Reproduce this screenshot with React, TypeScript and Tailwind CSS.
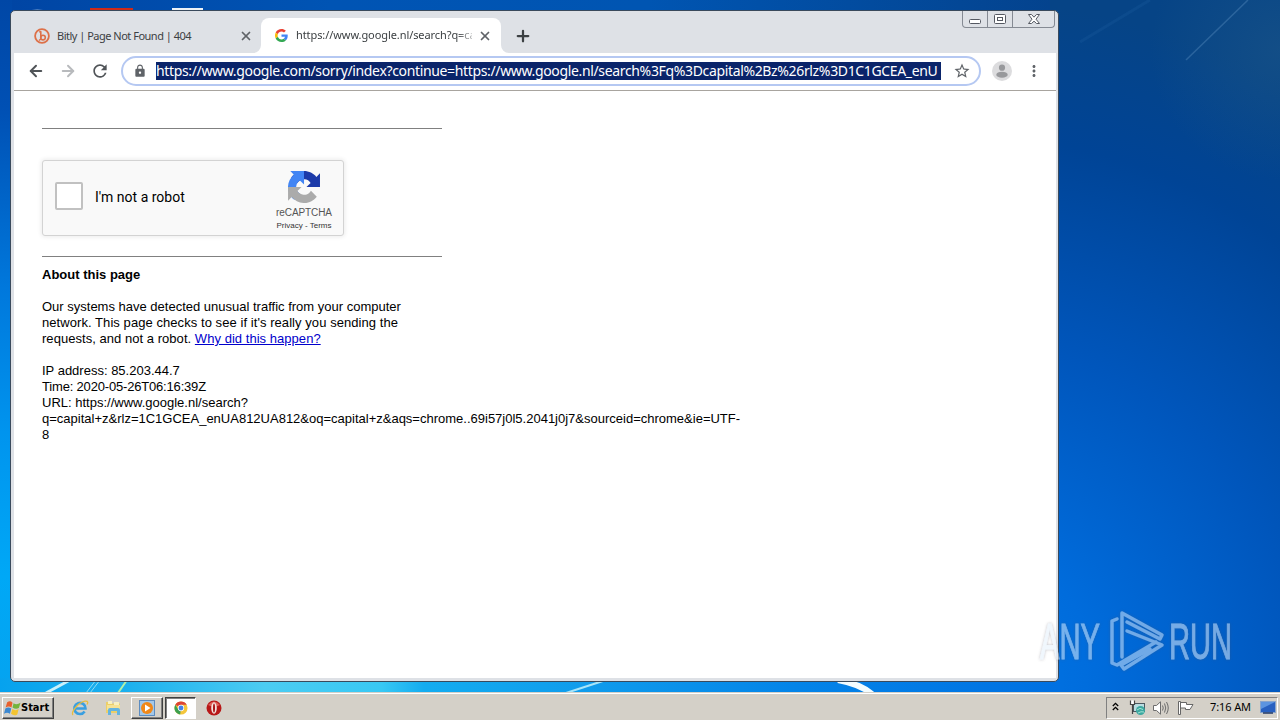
import React from 'react';
import { ArrowLeft, ArrowRight, X, Plus } from 'lucide-react';
import { MdLock, MdRefresh, MdStarBorder, MdMoreVert } from 'react-icons/md';

const PAGE_FONT = "font-['Liberation_Sans',Arial,sans-serif]";
const UI_FONT = "font-['Noto_Sans','Open_Sans',sans-serif]";

const Wallpaper: React.FC = () => (
  <svg className="absolute inset-0" width="1280" height="720" viewBox="0 0 1280 720">
    <defs>
      <linearGradient id="left" x1="0" y1="0" x2="0" y2="1">
        <stop offset="0" stopColor="#0047a6" />
        <stop offset="0.15" stopColor="#0050b4" />
        <stop offset="0.4" stopColor="#0078dc" />
        <stop offset="0.6" stopColor="#0094ee" />
        <stop offset="0.8" stopColor="#00a8f6" />
        <stop offset="1" stopColor="#06a2ee" />
      </linearGradient>
      <linearGradient id="top" x1="0" y1="0" x2="1" y2="0">
        <stop offset="0" stopColor="#0045a4" />
        <stop offset="0.3" stopColor="#0054b4" />
        <stop offset="0.6" stopColor="#0055b2" />
        <stop offset="1" stopColor="#04428c" />
      </linearGradient>
      <radialGradient id="right" gradientUnits="userSpaceOnUse" cx="960" cy="680" r="680">
        <stop offset="0" stopColor="#0078e8" />
        <stop offset="0.2" stopColor="#006cdc" />
        <stop offset="0.5" stopColor="#0056bc" />
        <stop offset="0.8" stopColor="#004496" />
        <stop offset="1" stopColor="#064486" />
      </radialGradient>
      <radialGradient id="corner" gradientUnits="userSpaceOnUse" cx="1280" cy="50" r="130">
        <stop offset="0" stopColor="#2a6088" stopOpacity="0.35" />
        <stop offset="1" stopColor="#2a6088" stopOpacity="0" />
      </radialGradient>
      <linearGradient id="bottom" x1="0" y1="0" x2="1" y2="0">
        <stop offset="0" stopColor="#06a2ee" />
        <stop offset="0.12" stopColor="#1cb0ee" />
        <stop offset="0.25" stopColor="#4cccf2" />
        <stop offset="0.36" stopColor="#38c8f4" />
        <stop offset="0.4" stopColor="#14acf0" />
        <stop offset="0.55" stopColor="#109cec" />
        <stop offset="0.75" stopColor="#0484e8" />
        <stop offset="1" stopColor="#0070e2" />
      </linearGradient>
    </defs>
    <rect width="1280" height="720" fill="url(#left)" />
    <rect x="12" width="1060" height="20" fill="url(#top)" />
    <rect x="1050" width="230" height="720" fill="url(#right)" />
    <rect x="1100" width="180" height="180" fill="url(#corner)" />
    <rect y="678" width="1060" height="20" fill="url(#bottom)" />
    <path d="M1186 60L1248 0" stroke="#4a80b4" strokeOpacity="0.5" strokeWidth="1.5" />
    <path d="M1080 42L1150 0" stroke="#2a68a8" strokeOpacity="0.2" strokeWidth="3" />
    <path d="M46 693L70 680" stroke="#c8f0fa" strokeWidth="3" />
    <path d="M86 693L96 680M90 693L100 680" stroke="#8fdcf4" strokeWidth="1" />
    <path d="M118 693L127 680" stroke="#b4f0a8" strokeWidth="2" />
    <path d="M566 693L606 680" stroke="#a8e4f8" strokeWidth="2" />
    <path d="M838 680Q860 684 872 694" stroke="#f2fcff" strokeWidth="6" fill="none" />
    <path d="M26 11Q37 8 49 11z" fill="#8fb0d8" />
    <rect x="90" y="8" width="43" height="3" fill="#d02a18" />
    <rect x="172" y="8" width="31" height="3" fill="#eef2f6" />
  </svg>
);

const GoogleIcon: React.FC = () => (
  <svg width="13" height="13" viewBox="0 0 48 48">
    <path fill="#EA4335" d="M24 9.5c3.54 0 6.71 1.22 9.21 3.6l6.85-6.85C35.9 2.38 30.47 0 24 0 14.62 0 6.51 5.38 2.56 13.22l7.98 6.19C12.43 13.72 17.74 9.5 24 9.5z" />
    <path fill="#4285F4" d="M46.98 24.55c0-1.57-.15-3.09-.38-4.55H24v9.02h12.94c-.58 2.96-2.26 5.48-4.78 7.18l7.73 6c4.51-4.18 7.09-10.36 7.09-17.65z" />
    <path fill="#FBBC05" d="M10.53 28.59A14.5 14.5 0 0 1 9.77 24c0-1.6.27-3.14.76-4.59l-7.98-6.19A23.99 23.99 0 0 0 0 24c0 3.88.92 7.54 2.56 10.78l7.97-6.19z" />
    <path fill="#34A853" d="M24 48c6.48 0 11.93-2.13 15.89-5.81l-7.73-6c-2.15 1.45-4.92 2.3-8.16 2.3-6.26 0-11.57-4.22-13.47-9.91l-7.98 6.19C6.51 42.62 14.62 48 24 48z" />
  </svg>
);

const BitlyIcon: React.FC = () => (
  <svg width="16" height="16" viewBox="0 0 16 16" fill="none" stroke="#dd7048">
    <circle cx="8" cy="8" r="6.9" strokeWidth="1.8" />
    <path d="M5.2 3.6l1.6.3v6.6" strokeWidth="1.6" />
    <circle cx="9" cy="9.6" r="2.3" strokeWidth="1.6" />
    <path d="M5 12.5l2-1.6" strokeWidth="1.4" />
  </svg>
);

const WindowControls: React.FC = () => (
  <div className="absolute right-[3px] top-0 flex h-[17px] w-[93px] rounded-b-[4px] border border-t-0 border-[#858a93]">
    <div className="flex w-[25px] items-center justify-center border-r border-[#858a93]">
      <svg width="12" height="12" viewBox="0 0 12 12"><rect x="0.5" y="6.5" width="11" height="4" rx="1" fill="#fff" stroke="#555962" /></svg>
    </div>
    <div className="flex w-[25px] items-center justify-center border-r border-[#858a93]">
      <svg width="12" height="11" viewBox="0 0 12 11" fill="#fff" stroke="#555962">
        <rect x="0.5" y="0.5" width="11" height="9" rx="1" />
        <rect x="3.5" y="3.5" width="5" height="3" />
      </svg>
    </div>
    <div className="flex flex-1 items-center justify-center">
      <svg width="12" height="11" viewBox="0 0 12 11">
        <path d="M.5 .5h3L6 3.2 8.5.5h3L8 5.2l3.5 4.3h-3L6 7.2 3.5 9.5h-3L4 5.2z" fill="#fff" stroke="#555962" />
      </svg>
    </div>
  </div>
);

const TabStrip: React.FC = () => (
  <div className="flex h-[42px] pl-[9px]">
    <div className="flex w-[238px] items-center pl-[11px] pt-[8px]">
      <BitlyIcon />
      <span className={`${UI_FONT} ml-[7px] flex-1 whitespace-nowrap text-[11px] tracking-[-0.5px] text-[#3c4043]`}>
        Bitly | Page Not Found | 404
      </span>
      <X className="mr-[8px] size-[14px] text-[#5f6368]" strokeWidth={3} />
    </div>
    <div className="relative mt-[7px] flex w-[240px] items-center rounded-t-[8px] bg-white pl-[14px]">
      <svg className="absolute -left-2 bottom-0" width="8" height="8"><path d="M8 0v8H0a8 8 0 0 0 8-8z" fill="#fff" /></svg>
      <svg className="absolute -right-2 bottom-0" width="8" height="8"><path d="M0 0v8h8a8 8 0 0 1-8-8z" fill="#fff" /></svg>
      <GoogleIcon />
      <span
        className={`${UI_FONT} ml-2 w-[176px] whitespace-nowrap text-[11px] tracking-[-0.08px] text-[#3c4043] [mask-image:linear-gradient(to_right,#000_160px,transparent_184px)]`}
      >
        https://www.google.nl/search?q=ca
      </span>
      <X className="ml-[6px] size-[14px] shrink-0 text-[#5f6368]" strokeWidth={3} />
    </div>
    <Plus className="ml-[13px] mt-[16px] size-[18px] text-[#3c4043]" strokeWidth={3} />
  </div>
);

const Toolbar: React.FC = () => (
  <div className="flex h-[38px] items-center border-b border-[#a8a49f] bg-white pb-[2px] pl-[13px]">
    <ArrowLeft className="size-[18px] text-[#505458]" strokeWidth={2.6} />
    <ArrowRight className="ml-[14px] size-[18px] text-[#b8babd]" strokeWidth={2.6} />
    <MdRefresh className="ml-[13px] size-[20px] text-[#505458]" />
    <div className="ml-[11px] flex h-[30px] w-[860px] shrink-0 items-center rounded-full border-2 border-[#b5c8f2] pl-[10px]">
      <MdLock className="size-[14px] text-[#5f6368]" />
      <span
        className={`${UI_FONT} ml-[9px] block h-[18px] w-[785px] whitespace-nowrap bg-[#0a246a] text-[14px] leading-[18px] tracking-[-0.35px] text-white`}
      >
        https://www.google.com/sorry/index?continue=https://www.google.nl/search%3Fq%3Dcapital%2Bz%26rlz%3D1C1GCEA_enU
      </span>
      <MdStarBorder className="ml-[12px] size-[18px] text-[#5f6368]" />
    </div>
    <svg className="ml-[11px]" width="20" height="20" viewBox="0 0 20 20">
      <circle cx="10" cy="10" r="10" fill="#dcdcde" />
      <circle cx="10" cy="6.7" r="3.1" fill="#98999c" />
      <ellipse cx="10" cy="13.7" rx="5.7" ry="3" fill="#98999c" />
    </svg>
    <MdMoreVert className="ml-[13px] size-[18px] text-[#5f6368]" />
  </div>
);

const Recaptcha: React.FC = () => (
  <div className="flex h-[76px] w-[302px] items-center rounded-[3px] border border-[#d3d3d3] bg-[#f9f9f9] shadow-[0_0_4px_1px_rgba(0,0,0,0.08)]">
    <div className="ml-3 mt-[-4px] size-7 rounded-[2px] border-2 border-[#c1c1c1] bg-white" />
    <span className="mb-[2px] ml-3 flex-1 whitespace-nowrap font-[Roboto,sans-serif] text-[14px] text-black">I'm not a robot</span>
    <div className={`${PAGE_FONT} mr-[11px] flex h-full w-14 flex-col items-center text-[#555]`}>
      <svg className="mt-[10px]" width="32" height="32" viewBox="0 0 64 64">
        <path d="M64 31.955l-.033-1.37V4.687l-7.177 7.178C50.915 4.674 41.981.081 31.975.081c-10.412 0-19.663 4.973-25.51 12.674l11.764 11.888a15.6 15.6 0 0 1 4.767-5.351c2.055-1.604 4.967-2.915 8.979-2.915.485 0 .859.057 1.134.163a15.57 15.57 0 0 1 12.131 7.337l-8.327 8.327L64 32" fill="#1c3aa9" />
        <path d="M31.862.094l-1.37.033H4.594l7.178 7.177C4.58 13.179-.012 22.113-.012 32.119c0 10.412 4.973 19.663 12.674 25.51L24.55 45.866a15.6 15.6 0 0 1-5.351-4.767c-1.604-2.055-2.915-4.967-2.915-8.979 0-.485.057-.859.163-1.134a15.57 15.57 0 0 1 7.337-12.131l8.327 8.327L31.976.095" fill="#4285f4" />
        <path d="M.064 32.14l.033 1.37v25.898l7.177-7.178c5.875 7.191 14.809 11.783 24.815 11.783 10.412 0 19.663-4.973 25.51-12.674L45.835 39.452a15.6 15.6 0 0 1-4.767 5.351c-2.055 1.604-4.967 2.915-8.979 2.915-.485 0-.859-.057-1.134-.163a15.57 15.57 0 0 1-12.131-7.337l8.327-8.327L.064 32.094" fill="#ababab" />
      </svg>
      <span className="mt-1 whitespace-nowrap text-[10px] leading-[12px] tracking-[-0.1px]">reCAPTCHA</span>
      <span className="mt-px whitespace-nowrap text-[8px] leading-[12px] text-[#333]">Privacy - Terms</span>
    </div>
  </div>
);

const SorryPage: React.FC = () => (
  <main className={`${PAGE_FONT} flex-1 bg-white pl-[28px] pt-[37px] text-[13px] leading-[16px] text-black`}>
    <hr className="w-[400px] border-t border-[#808080]" />
    <div className="pb-[20px] pt-[31px]">
      <Recaptcha />
    </div>
    <hr className="w-[400px] border-t border-[#808080]" />
    <h1 className="mt-[10px] font-bold">About this page</h1>
    <p className="mt-4 whitespace-nowrap">
      Our systems have detected unusual traffic from your computer
      <br />
      <span className="tracking-[0.065px]">network. This page checks to see if it's really you sending the</span>
      <br />
      <span className="tracking-[0.04px]">
        requests, and not a robot. <a href="#" className="text-[#0000cc] underline">Why did this happen?</a>
      </span>
    </p>
    <p className="mt-4 whitespace-nowrap">
      IP address: 85.203.44.7
      <br />
      <span className="tracking-[-0.18px]">Time: 2020-05-26T06:16:39Z</span>
      <br />
      URL: https://www.google.nl/search?
      <br />
      q=capital+z&amp;rlz=1C1GCEA_enUA812UA812&amp;oq=capital+z&amp;aqs=chrome..69i57j0l5.2041j0j7&amp;sourceid=chrome&amp;ie=UTF-
      <br />8
    </p>
  </main>
);

const Watermark: React.FC = () => (
  <svg className="absolute left-[1030px] top-[600px]" width="220" height="80" viewBox="0 0 220 80" opacity="0.52">
    <defs>
      <filter id="soft" x="-10%" y="-10%" width="120%" height="120%">
        <feDropShadow dx="0" dy="0" stdDeviation="1.5" floodColor="#556" floodOpacity="0.7" />
      </filter>
    </defs>
    <g filter="url(#soft)">
      <g fill="#e4f0fc" stroke="#e4f0fc" strokeWidth="0.9" fontFamily="Liberation Sans, sans-serif" fontSize="50">
        <text x="10" y="59" textLength="60" lengthAdjust="spacingAndGlyphs">ANY</text>
        <text x="139" y="59" textLength="63" lengthAdjust="spacingAndGlyphs">RUN</text>
      </g>
      <g fill="none" stroke="#d8e8fa" strokeWidth="3.4" strokeLinejoin="round" strokeLinecap="round">
        <path d="M92 57V13L132 35L130 39L97 22" />
        <path d="M87 19L82 21V63L87 65L126 42" />
        <path d="M97 31L132 45L94 69L91 65L120 49" />
      </g>
    </g>
  </svg>
);

const WindowsFlag: React.FC = () => (
  <svg width="17" height="16" viewBox="0 0 16 15">
    <path d="M3 2Q6 0 8 2.500L7 7Q4.500 5 1.500 7z" fill="#e8602c" />
    <path d="M9 3Q12 5 15.500 2.500L14 7.500Q11 9 8 7z" fill="#74b43c" />
    <path d="M1.300 8Q4 6 6.800 8L5.600 13Q3 11 0 13z" fill="#3c88d0" />
    <path d="M7.800 8.500Q11 10.500 13.800 8.500L12.500 13.500Q9.500 15.500 6.600 13z" fill="#f4c430" />
  </svg>
);

const IeIcon: React.FC = () => (
  <svg width="18" height="18" viewBox="0 0 18 18" fill="none">
    <path d="M4.500 9.500H14.500A5.600 5.600 0 1 0 13.600 12.500" stroke="#3a9fe0" strokeWidth="2.600" />
    <path d="M2 16C-.5 13 8 3 14 2.200C17.500 1.800 17 4 16 5.500" stroke="#e8bc3c" strokeWidth="1.300" />
  </svg>
);

const FolderIcon: React.FC = () => (
  <svg width="17" height="16" viewBox="0 0 17 16">
    <path d="M1 2h5l1 1.500h8V13H1z" fill="#eccf68" />
    <path d="M3 1h4v3H3zM9 2h5v3H9z" fill="#f8f0c0" />
    <path d="M2 5h13v5H2z" fill="#f6e294" />
    <path d="M3 15V10Q3 8 5 8H13Q15 8 15 10V15H12V11H6V15z" fill="#64b4e0" />
  </svg>
);

const ChromeIcon: React.FC = () => (
  <svg width="14" height="14" viewBox="0 0 16 16">
    <circle cx="8" cy="8" r="7.500" fill="#f4c63c" />
    <path d="M8 8L1.500 4.250A7.500 7.500 0 0 1 14.500 4.250H8z" fill="#dd4436" />
    <path d="M8 8L7 15.400A7.500 7.500 0 0 1 1.500 4.250L5 10z" fill="#3ca050" />
    <circle cx="8" cy="8" r="3.600" fill="#fff" />
    <circle cx="8" cy="8" r="2.800" fill="#4482e8" />
  </svg>
);

const Tray: React.FC = () => (
  <div className="mr-[2px] flex h-[22px] w-[172px] items-center border border-b-white border-l-[#808080] border-r-white border-t-[#808080]">
    <svg className="ml-[5px] mb-[3px]" width="7" height="9" viewBox="0 0 7 9" fill="none" stroke="#000" strokeWidth="1.300">
      <path d="M.8 4L3.500 1.300L6.200 4M.8 8L3.500 5.300L6.200 8" />
    </svg>
    <svg className="ml-[10px]" width="17" height="16" viewBox="0 0 17 16">
      <rect x="4.500" y="3.500" width="11" height="8" fill="#b8dce0" stroke="#4c5860" />
      <path d="M1.500 .5V4.500H5.500V.5M3.500 4.500V14" stroke="#444" strokeWidth="1.200" fill="#fff" />
      <circle cx="11.500" cy="10.500" r="4.500" fill="#3ca8a0" />
      <path d="M8 10Q11 7 14 9.500M9 13Q12 11 15 12" stroke="#a4e4d4" fill="none" />
    </svg>
    <svg className="ml-[7px]" width="17" height="14" viewBox="0 0 17 14" fill="none" stroke="#6c6c6c">
      <path d="M.5 4.500H3.500L7.500 .8V13.200L3.500 9.500H.5z" fill="#fff" />
      <path d="M9.500 4.500Q11 7 9.500 9.500M11.500 2.500Q14 7 11.500 11.500M13.500 1Q17 7 13.500 13" />
    </svg>
    <svg className="ml-[8px]" width="16" height="14" viewBox="0 0 16 14" fill="#fff" stroke="#666">
      <path d="M.5 .5H2.500V13.500H.5zM2.500 1.500H8.500V3.500H15L12 8.500H7.500V7H2.500z" />
    </svg>
    <span className={`${UI_FONT} ml-[16px] whitespace-nowrap text-[11px] tracking-[-0.1px] text-black`}>7:16 AM</span>
    <svg className="ml-auto mr-px" width="16" height="13" viewBox="0 0 16 13">
      <rect x=".5" y=".5" width="15" height="11" fill="#2860c0" stroke="#88a4cc" />
      <path d="M1 1H15L1 8z" fill="#5c94e0" />
      <path d="M3 12H13" stroke="#203868" strokeWidth="1.500" />
    </svg>
  </div>
);

const Taskbar: React.FC = () => (
  <footer className="absolute inset-x-0 bottom-0 flex h-[28px] items-center border-t border-[#d4d0c8] bg-[#d4d0c8] shadow-[inset_0_1px_0_#fff]">
    <button className="ml-[2px] mt-[2px] flex h-[22px] w-[52px] items-center border border-b-[#404040] border-l-white border-r-[#404040] border-t-white pl-px shadow-[inset_-1px_-1px_0_#808080]">
      <WindowsFlag />
      <span className="pt-px font-['DejaVu_Sans_Condensed','DejaVu_Sans',sans-serif] text-[11px] font-bold text-black">Start</span>
    </button>
    <div className="ml-[17px] mt-[2px] flex items-center">
      <IeIcon />
      <div className="ml-[16px]"><FolderIcon /></div>
      <div className="ml-[9px] flex h-[22px] w-[32px] items-center justify-center border border-b-[#404040] border-l-white border-r-[#404040] border-t-white shadow-[inset_-1px_-1px_0_#808080]">
        <svg width="16" height="16" viewBox="0 0 16 16">
          <rect x=".5" y=".5" width="15" height="15" fill="#a4c8e8" stroke="#5c8cc0" />
          <circle cx="8" cy="8" r="6" fill="#f08818" />
          <path d="M6 4.500L11.500 8L6 11.500z" fill="#fff" />
        </svg>
      </div>
      <div className="ml-[2px] flex h-[22px] w-[31px] items-center justify-center border border-b-white border-l-[#404040] border-r-white border-t-[#404040] bg-white shadow-[inset_1px_1px_0_#808080]">
        <ChromeIcon />
      </div>
      <svg className="ml-[10px]" width="16" height="16" viewBox="0 0 16 16">
        <circle cx="8" cy="8" r="7.500" fill="#b81818" />
        <path d="M2 5Q8 -2 14 5Q8 8 2 5z" fill="#e06058" />
        <ellipse cx="8" cy="8" rx="2.800" ry="5.800" fill="#f4e4e0" />
        <ellipse cx="8" cy="8" rx="1" ry="4.500" fill="#a81414" />
      </svg>
    </div>
    <div className="ml-auto mt-[2px]"><Tray /></div>
  </footer>
);

export default function App() {
  return (
    <div className="relative h-[720px] w-[1280px] overflow-hidden">
      <Wallpaper />
      {/* Browser window */}
      <div className="absolute left-[10px] top-[10px] flex h-[672px] w-[1049px] flex-col rounded-[5px] border border-[#3a4a5c] bg-[#dee1e6] pb-[3px] pl-[3px] pr-[2px]">
        <WindowControls />
        <TabStrip />
        <Toolbar />
        <SorryPage />
      </div>
      <Watermark />
      <Taskbar />
    </div>
  );
}
